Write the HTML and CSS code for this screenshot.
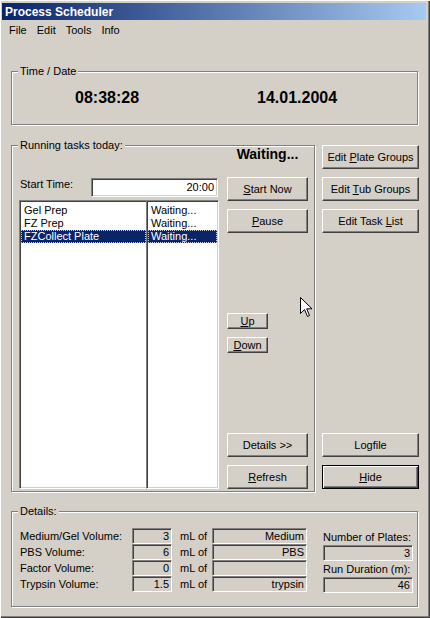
FILE: index.html
```html
<!DOCTYPE html>
<html>
<head>
<meta charset="utf-8">
<title>Process Scheduler</title>
<link rel="stylesheet" href="styles.css">
</head>
<body>
<div class="window">
  <div class="titlebar"><span class="title">Process Scheduler</span></div>
  <div class="menubar">
    <span>File</span><span>Edit</span><span>Tools</span><span>Info</span>
  </div>
  <div class="main">
    <div class="group timedate">
      <span class="legend">Time / Date</span>
      <div class="clock">08:38:28</div>
      <div class="clock">14.01.2004</div>
    </div>

    <div class="middle">
      <div class="group running">
        <span class="legend">Running tasks today:</span>
        <div class="left-col">
          <div class="start-row">
            <span class="start-label">Start Time:</span>
            <div class="edit">20:00</div>
          </div>
          <div class="lists">
            <div class="listbox names">
              <div class="item">Gel Prep</div>
              <div class="item">FZ Prep</div>
              <div class="item sel">FZCollect Plate</div>
            </div>
            <div class="listbox states">
              <div class="item">Waiting...</div>
              <div class="item">Waiting...</div>
              <div class="item sel">Waiting...</div>
            </div>
          </div>
        </div>
        <div class="btn-col">
          <div class="status">Waiting...</div>
          <button class="btn first"><u>S</u>tart Now</button>
          <button class="btn"><u>P</u>ause</button>
          <button class="btn small far"><u>U</u>p</button>
          <button class="btn small">
            <u>D</u>own</button>
          <button class="btn far">Details &gt;&gt;</button>
          <button class="btn"><u>R</u>efresh</button>
        </div>
      </div>
      <div class="side-col">
        <button class="btn wide">Edit <u>P</u>late Groups</button>
        <button class="btn wide">Edit <u>T</u>ub Groups</button>
        <button class="btn wide">Edit Task <u>L</u>ist</button>
        <button class="btn wide bottom">Logfile</button>
        <button class="btn wide default"><u>H</u>ide</button>
      </div>
    </div>

    <div class="group details">
      <span class="legend">Details:</span>
      <div class="dgrid">
        <span class="dlabel">Medium/Gel Volume:</span>
        <div class="ro">3</div>
        <span class="unit">mL of</span>
        <div class="ro">Medium</div>

        <span class="dlabel">PBS Volume:</span>
        <div class="ro">6</div>
        <span class="unit">mL of</span>
        <div class="ro">PBS</div>

        <span class="dlabel">Factor Volume:</span>
        <div class="ro">0</div>
        <span class="unit">mL of</span>
        <div class="ro"></div>

        <span class="dlabel">Trypsin Volume:</span>
        <div class="ro">1.5</div>
        <span class="unit">mL of</span>
        <div class="ro">trypsin</div>
      </div>
      <div class="rcol">
        <span class="dlabel">Number of Plates:</span>
        <div class="ro">3</div>
        <span class="dlabel">Run Duration (m):</span>
        <div class="ro">46</div>
      </div>
    </div>
  </div>

  <svg class="cursor" width="13" height="21" viewBox="0 0 13 21">
    <path d="M0.5 0.5 L0.5 16.5 L4.5 12.5 L7.5 19.5 L9.5 18.5 L6.7 11.8 L12 11.8 Z" fill="#fff" stroke="#000" stroke-width="1" stroke-linejoin="miter"/>
  </svg>
</div>
</body>
</html>
```

FILE: styles.css
```css
html, body {
  margin: 0;
  padding: 0;
  background: #d4d0c8;
}

body {
  font-family: "Liberation Sans", Arial, sans-serif;
  font-size: 11px;
  color: #000;
}

.window {
  position: relative;
  width: 430px;
  height: 618px;
  box-sizing: border-box;
  padding-top: 3px;
  background: #d4d0c8;
  overflow: hidden;
  box-shadow: inset 1px 1px 0 #ffffff, inset -1px -1px 0 #404040, inset -2px -2px 0 #808080;
}

.titlebar {
  margin: 0 4px 0 2px;
  height: 17px;
  padding-left: 3px;
  display: flex;
  align-items: center;
  background: linear-gradient(to right, #0a246a, #a6caf0);
}

.title {
  color: #fff;
  font-weight: bold;
  font-size: 12px;
}

.menubar {
  display: flex;
  align-items: center;
  height: 20px;
  padding-left: 9px;
  gap: 10px;
}

.main {
  padding-left: 11px;
}

.group {
  position: relative;
  box-sizing: border-box;
  border: 1px solid #808080;
  box-shadow: 1px 1px 0 #ffffff, inset 1px 1px 0 #ffffff;
}

.legend {
  position: absolute;
  top: -7px;
  left: 6px;
  padding: 0 2px;
  line-height: 13px;
  background: #d4d0c8;
}

.timedate {
  margin-top: 31px;
  width: 407px;
  height: 54px;
  display: flex;
  align-items: center;
  padding-left: 63px;
  gap: 118px;
}

.clock {
  font-size: 16px;
  font-weight: bold;
}

.middle {
  display: flex;
  margin-top: 20px;
}

.running {
  width: 304px;
  height: 347px;
  display: flex;
  padding-left: 7px;
  gap: 8px;
}

.left-col {
  width: 200px;
  padding-top: 32px;
}

.start-row {
  display: flex;
  height: 19px;
}

.start-label {
  width: 71px;
  padding-left: 1px;
  line-height: 13px;
}

.edit {
  width: 127px;
  height: 19px;
  box-sizing: border-box;
  background: #fff;
  border: 1px solid;
  border-color: #808080 #ffffff #ffffff #808080;
  box-shadow: inset 1px 1px 0 #404040, inset -1px -1px 0 #d4d0c8;
  text-align: right;
  padding-right: 3px;
  line-height: 16px;
}

.lists {
  display: flex;
  margin-top: 3px;
  height: 289px;
}

.listbox {
  box-sizing: border-box;
  height: 100%;
  background: #fff;
  border: 1px solid;
  border-color: #808080 #ffffff #ffffff #808080;
  box-shadow: inset 1px 1px 0 #404040, inset -1px -1px 0 #d4d0c8;
  padding: 3px 1px 0 1px;
}

.names {
  width: 129px;
}

.states {
  width: 73px;
  margin-left: -2px;
}

.item {
  height: 13px;
  line-height: 13px;
  padding-left: 3px;
  white-space: nowrap;
  overflow: hidden;
}

.states .item {
  padding-left: 3px;
}

.item.sel {
  background: #0a246a;
  color: #fff;
  outline: 1px dotted #c8c8d8;
  outline-offset: -1px;
}

.btn-col {
  width: 81px;
  display: flex;
  flex-direction: column;
  align-items: flex-start;
}

.status {
  width: 81px;
  height: 16px;
  line-height: 16px;
  text-align: center;
  font-weight: bold;
  font-size: 14px;
}

.btn {
  box-sizing: border-box;
  width: 81px;
  height: 24px;
  margin: 8px 0 0 0;
  padding: 0;
  font-family: "Liberation Sans", Arial, sans-serif;
  font-size: 11px;
  color: #000;
  background: #d4d0c8;
  border: 1px solid;
  border-color: #ffffff #404040 #404040 #ffffff;
  box-shadow: inset -1px -1px 0 #808080;
}

.btn.first {
  margin-top: 15px;
}

.btn.small {
  width: 41px;
  height: 16px;
  line-height: 12px;
}

.btn.far {
  margin-top: 80px;
}

.side-col {
  width: 97px;
  margin-left: 7px;
  display: flex;
  flex-direction: column;
}

.btn.wide {
  width: 97px;
}

.side-col .btn.wide:first-child {
  margin-top: 0;
}

.btn.bottom {
  margin-top: 200px;
}

.btn.default {
  border-color: #000;
  box-shadow: inset 1px 1px 0 #ffffff, inset -1px -1px 0 #404040, inset -2px -2px 0 #808080;
}

.details {
  margin-top: 19px;
  width: 407px;
  height: 96px;
  display: flex;
  padding: 16px 0 0 8px;
}

.dgrid {
  display: grid;
  grid-template-columns: 112px 40px 40px 95px;
  grid-auto-rows: 16px;
}

.dlabel {
  line-height: 16px;
  white-space: nowrap;
}

.unit {
  line-height: 16px;
  padding-left: 8px;
}

.ro {
  box-sizing: border-box;
  height: 16px;
  border: 1px solid;
  border-color: #808080 #ffffff #ffffff #808080;
  box-shadow: inset 1px 1px 0 #404040, inset -1px -1px 0 #d4d0c8;
  text-align: right;
  padding-right: 2px;
  line-height: 14px;
}

.rcol {
  margin-left: 16px;
  width: 90px;
  padding-top: 1px;
  display: flex;
  flex-direction: column;
}

.cursor {
  position: absolute;
  left: 300px;
  top: 297px;
}
```
